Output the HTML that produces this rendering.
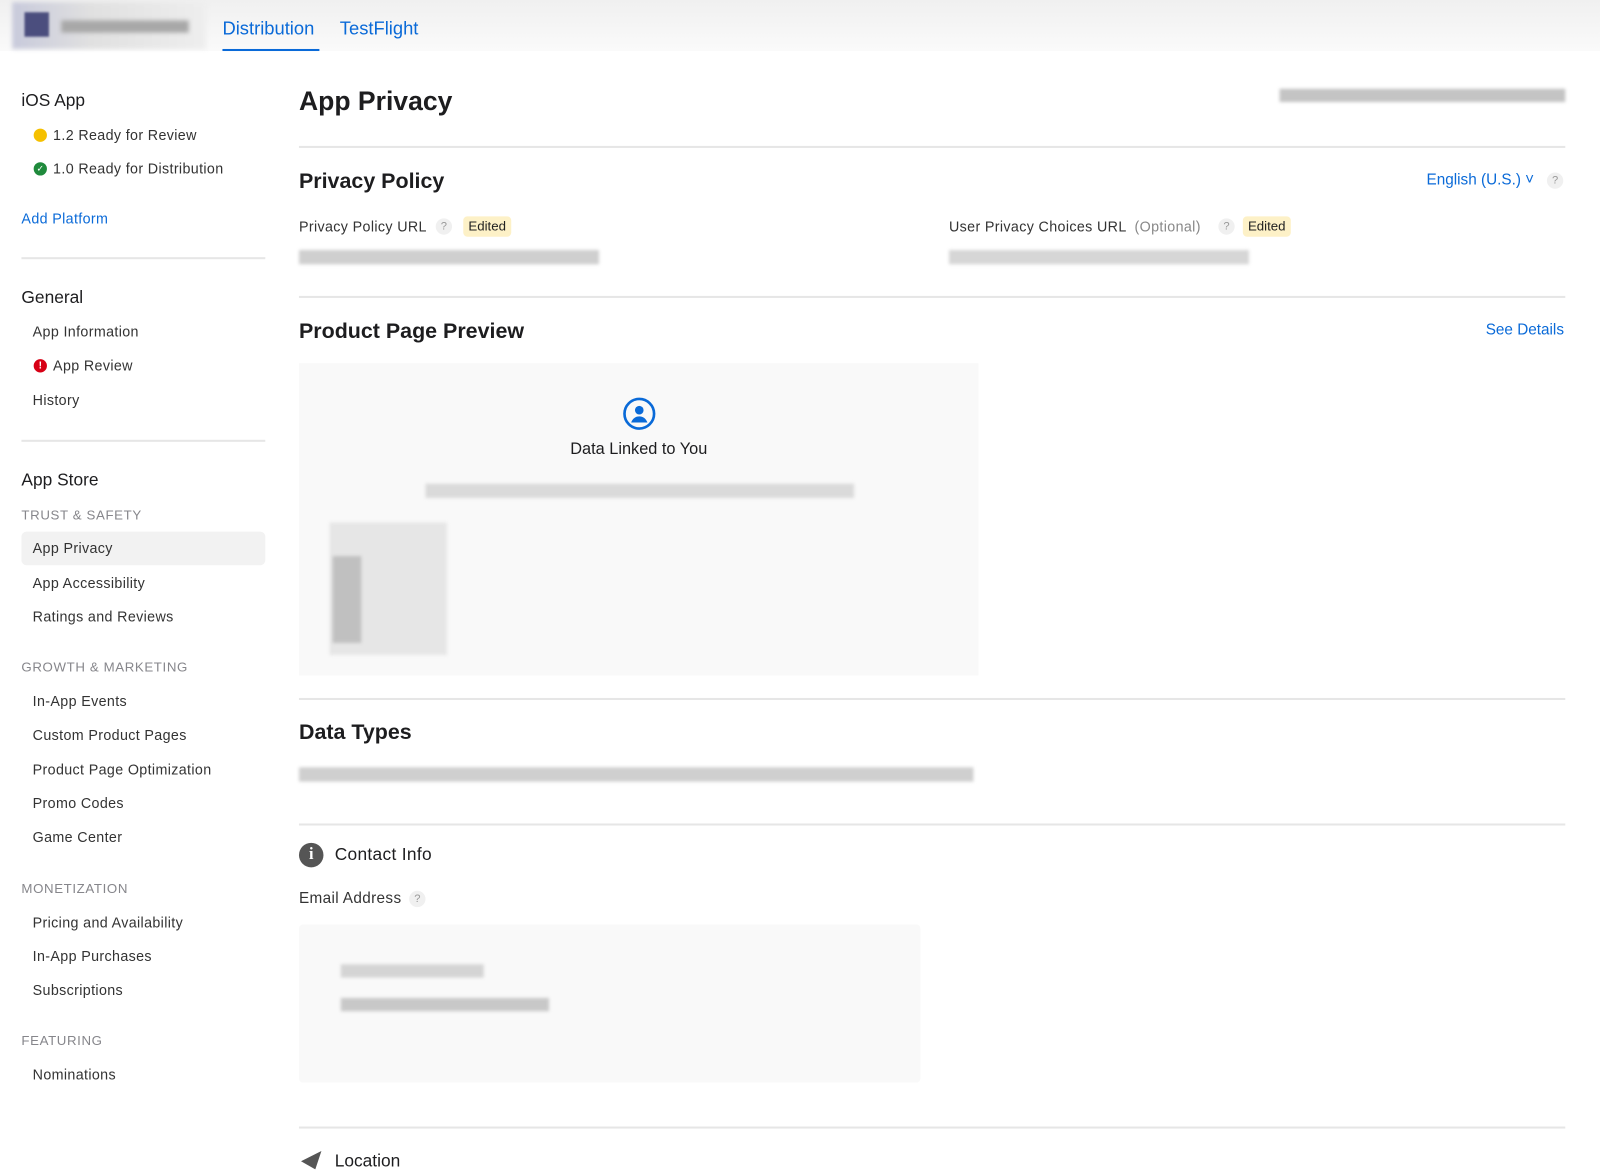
<!DOCTYPE html>
<html><head><meta charset="utf-8"><style>
*{margin:0;padding:0;box-sizing:border-box}
html,body{width:1600px;height:1155px;overflow:hidden;background:#fff}
#w{position:absolute;left:0;top:0;width:1568px;height:1132px;transform:scale(1.0204);transform-origin:0 0;font-family:"Liberation Sans",sans-serif;color:#1d1d1f}
.a{position:absolute;white-space:nowrap}
.s{font-size:14px;line-height:20px;color:#333;letter-spacing:.35px}
.h{font-size:17px;line-height:22px;color:#1d1d1f}
.cap{font-size:13px;line-height:18px;color:#86868b;letter-spacing:.6px}
.hr{position:absolute;height:2px;background:#e6e6e6}
.h2{font-size:21px;font-weight:bold;line-height:26px}
.blur{position:absolute;background:#cfcfcf;filter:blur(1.5px)}
.q{position:absolute;width:16px;height:16px;border-radius:50%;background:#f0f0f0;color:#999;font-size:11px;line-height:16px;text-align:center}
.ed{position:absolute;background:#fdf1c7;border-radius:4px;font-size:13px;line-height:20px;padding:0 5px;color:#222}
.blue{color:#0a6ad8}
</style></head><body><div id="w">
<div class="a" style="left:0;top:0;width:1568px;height:50px;background:linear-gradient(#f0f0f0,#fafafa)"></div>
<div class="a" style="left:12px;top:2px;width:190px;height:46px;background:linear-gradient(90deg,#c8cadb,#e0e0e0 40%,#eee);filter:blur(2px)"></div>
<div class="a" style="left:24px;top:12px;width:24px;height:24px;background:#4b4e7e;filter:blur(1px)"></div>
<div class="a" style="left:60px;top:20px;width:125px;height:12px;background:#a8a8a8;filter:blur(2px)"></div>
<div class="a blue" style="left:218px;top:16px;font-size:18px;line-height:24px">Distribution</div>
<div class="a" style="left:218px;top:48px;width:95px;height:2px;background:#0a6ad8"></div>
<div class="a blue" style="left:333px;top:16px;font-size:18px;line-height:24px">TestFlight</div>

<div class="a h" style="left:21px;top:88px">iOS App</div>
<div class="a" style="left:33px;top:126px;width:13px;height:13px;border-radius:50%;background:#f5c000"></div>
<div class="a s" style="left:52px;top:122px">1.2 Ready for Review</div>
<div class="a" style="left:33px;top:159px;width:13px;height:13px;border-radius:50%;background:#1f8a3c;color:#fff;font-size:9px;line-height:13px;text-align:center">✓</div>
<div class="a s" style="left:52px;top:155px">1.0 Ready for Distribution</div>
<div class="a s blue" style="left:21px;top:204px">Add Platform</div>
<div class="hr" style="left:21px;top:252px;width:239px"></div>
<div class="a h" style="left:21px;top:281px">General</div>
<div class="a s" style="left:32px;top:315px">App Information</div>
<div class="a" style="left:33px;top:352px;width:13px;height:13px;border-radius:50%;background:#d70015;color:#fff;font-size:10px;font-weight:bold;line-height:13px;text-align:center">!</div>
<div class="a s" style="left:52px;top:348px">App Review</div>
<div class="a s" style="left:32px;top:382px">History</div>
<div class="hr" style="left:21px;top:431px;width:239px"></div>
<div class="a h" style="left:21px;top:460px">App Store</div>
<div class="a cap" style="left:21px;top:496px">TRUST &amp; SAFETY</div>
<div class="a" style="left:21px;top:521px;width:239px;height:33px;background:#f2f2f2;border-radius:5px"></div>
<div class="a s" style="left:32px;top:527px">App Privacy</div>
<div class="a s" style="left:32px;top:561px">App Accessibility</div>
<div class="a s" style="left:32px;top:594px">Ratings and Reviews</div>
<div class="a cap" style="left:21px;top:645px">GROWTH &amp; MARKETING</div>
<div class="a s" style="left:32px;top:677px">In-App Events</div>
<div class="a s" style="left:32px;top:710px">Custom Product Pages</div>
<div class="a s" style="left:32px;top:744px">Product Page Optimization</div>
<div class="a s" style="left:32px;top:777px">Promo Codes</div>
<div class="a s" style="left:32px;top:810px">Game Center</div>
<div class="a cap" style="left:21px;top:862px">MONETIZATION</div>
<div class="a s" style="left:32px;top:894px">Pricing and Availability</div>
<div class="a s" style="left:32px;top:927px">In-App Purchases</div>
<div class="a s" style="left:32px;top:960px">Subscriptions</div>
<div class="a cap" style="left:21px;top:1011px">FEATURING</div>
<div class="a s" style="left:32px;top:1043px">Nominations</div>

<div class="a" style="left:293px;top:83px;font-size:26px;font-weight:bold;line-height:32px">App Privacy</div>
<div class="blur" style="left:1254px;top:87px;width:280px;height:13px;background:#c4c4c4"></div>
<div class="hr" style="left:293px;top:143px;width:1241px"></div>

<div class="a h2" style="left:293px;top:165px">Privacy Policy</div>
<div class="a blue" style="left:1398px;top:167px;font-size:15px;line-height:20px">English (U.S.) ˅</div>
<div class="q" style="left:1516px;top:169px">?</div>
<div class="a s" style="left:293px;top:212px">Privacy Policy URL</div>
<div class="q" style="left:427px;top:214px">?</div>
<div class="ed" style="left:454px;top:212px">Edited</div>
<div class="blur" style="left:293px;top:245px;width:294px;height:14px"></div>
<div class="a s" style="left:930px;top:212px">User Privacy Choices URL <span style="color:#888;margin-left:4px">(Optional)</span></div>
<div class="q" style="left:1194px;top:214px">?</div>
<div class="ed" style="left:1218px;top:212px">Edited</div>
<div class="blur" style="left:930px;top:245px;width:294px;height:14px;background:#d6d6d6"></div>
<div class="hr" style="left:293px;top:290px;width:1241px"></div>

<div class="a h2" style="left:293px;top:312px">Product Page Preview</div>
<div class="a blue" style="left:1456px;top:314px;font-size:15px;line-height:20px">See Details</div>
<div class="a" style="left:293px;top:356px;width:666px;height:306px;background:#f9f9f9"></div>
<svg class="a" style="left:610px;top:389px" width="33" height="33" viewBox="0 0 33 33"><circle cx="16.5" cy="16.5" r="14.5" fill="none" stroke="#0a6ad8" stroke-width="2.6"/><circle cx="16.5" cy="13" r="4.2" fill="#0a6ad8"/><path d="M8.5 25c1.5-4 4.5-6 8-6s6.5 2 8 6z" fill="#0a6ad8"/></svg>
<div class="a" style="left:293px;top:431px;width:666px;text-align:center;font-size:16px;line-height:20px">Data Linked to You</div>
<div class="blur" style="left:417px;top:474px;width:420px;height:14px;background:#dadada"></div>
<div class="blur" style="left:323px;top:512px;width:115px;height:130px;background:#e6e6e6"></div>
<div class="blur" style="left:326px;top:545px;width:28px;height:85px;background:#c0c0c0"></div>
<div class="hr" style="left:293px;top:684px;width:1241px"></div>

<div class="a h2" style="left:293px;top:705px">Data Types</div>
<div class="blur" style="left:293px;top:752px;width:661px;height:14px"></div>
<div class="hr" style="left:293px;top:807px;width:1241px"></div>

<div class="a" style="left:293px;top:826px;width:24px;height:24px;border-radius:50%;background:#555;color:#fff;font-family:'Liberation Serif',serif;font-weight:bold;font-size:16px;line-height:24px;text-align:center">i</div>
<div class="a" style="left:328px;top:827px;font-size:17px;line-height:22px;letter-spacing:.3px">Contact Info</div>
<div class="a s" style="left:293px;top:871px;font-size:15px">Email Address</div>
<div class="q" style="left:401px;top:873px">?</div>
<div class="a" style="left:293px;top:906px;width:609px;height:155px;background:#f9f9f9;border-radius:4px"></div>
<div class="blur" style="left:334px;top:945px;width:140px;height:13px;background:#d4d4d4"></div>
<div class="blur" style="left:334px;top:978px;width:204px;height:13px;background:#c8c8c8"></div>
<div class="hr" style="left:293px;top:1104px;width:1241px"></div>
<svg class="a" style="left:293px;top:1126px" width="24" height="20"><path d="M2 12L22 2L16 20z" fill="#555"/></svg>
<div class="a" style="left:328px;top:1127px;font-size:17px;line-height:22px">Location</div>
</div></body></html>
